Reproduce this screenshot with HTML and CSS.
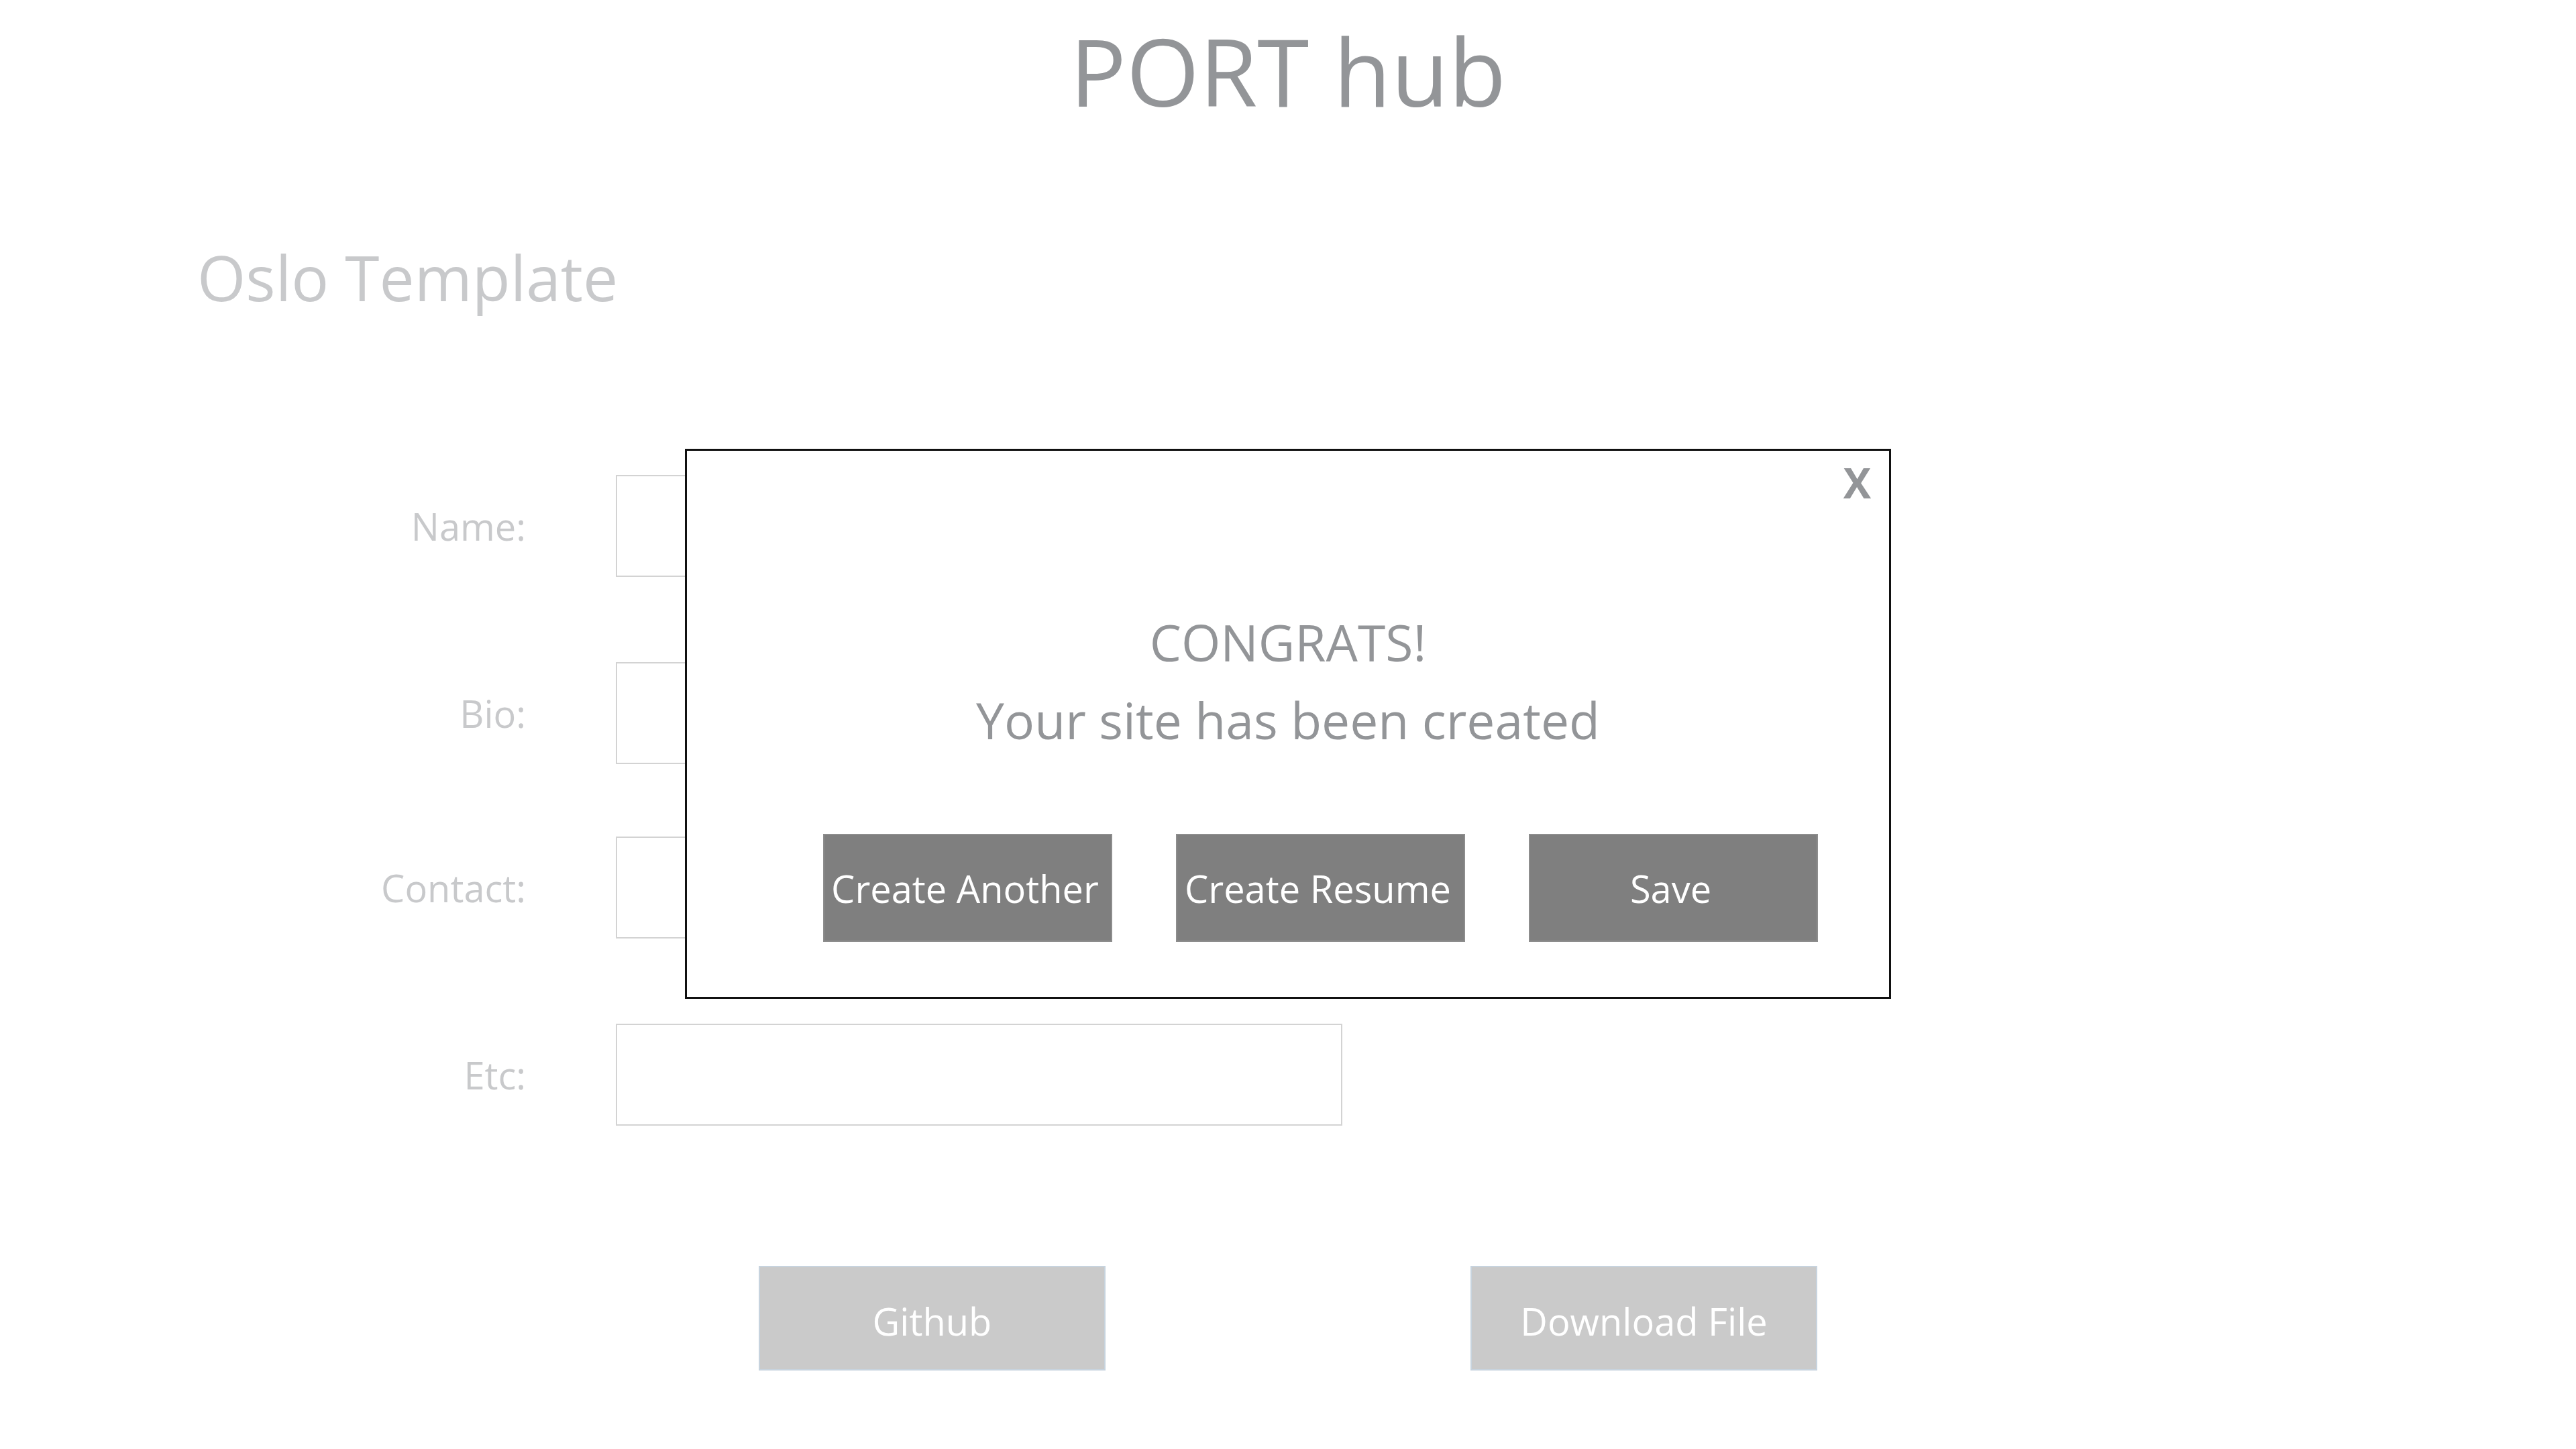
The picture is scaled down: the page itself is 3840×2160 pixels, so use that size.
FILE: index.html
```html
<!DOCTYPE html>
<html lang="en">
<head>
<meta charset="utf-8">
<title>PORT hub</title>
<link rel="stylesheet" href="styles.css">
</head>
<body>
<div class="page">
  <h1 class="brand">PORT hub</h1>
  <h2 class="template-title">Oslo Template</h2>
  <form class="form">
    <div class="row">
      <label class="label" for="f-name">Name:</label>
      <input class="field" id="f-name" type="text">
    </div>
    <div class="row row-wide">
      <label class="label" for="f-bio">Bio:</label>
      <input class="field" id="f-bio" type="text">
    </div>
    <div class="row row-narrow">
      <label class="label" for="f-contact">Contact:</label>
      <input class="field" id="f-contact" type="text">
    </div>
    <div class="row row-wide">
      <label class="label" for="f-etc">Etc:</label>
      <input class="field" id="f-etc" type="text">
    </div>
  </form>
  <div class="actions">
    <button class="btn-light" type="button">Github</button>
    <button class="btn-light" type="button">Download File</button>
  </div>

  <div class="modal">
    <button class="modal-close" type="button">X</button>
    <div class="modal-text">
      <div class="modal-line">CONGRATS!</div>
      <div class="modal-line second">Your site has been created</div>
    </div>
    <div class="modal-actions">
      <button class="btn-dark" type="button">Create Another</button>
      <button class="btn-dark" type="button">Create Resume</button>
      <button class="btn-dark" type="button">Save</button>
    </div>
  </div>
</div>
</body>
</html>
```

FILE: styles.css
```css
* { box-sizing: border-box; }

html, body {
  margin: 0;
  padding: 0;
  background: #ffffff;
}

body {
  font-family: "Open Sans", "Noto Sans", sans-serif;
  width: 3840px;
  height: 2160px;
  overflow: hidden;
}

.page {
  position: relative;
  width: 3840px;
  height: 2160px;
  display: flex;
  flex-direction: column;
}

.brand {
  margin: 35px 0 0 0;
  font-size: 140px;
  line-height: 1;
  font-weight: 400;
  color: #939598;
  text-align: center;
}

.template-title {
  margin: 192px 0 0 294px;
  font-size: 93px;
  line-height: 1;
  font-weight: 400;
  color: #c8c9cb;
}

.form {
  margin: 248px 0 0 0;
  display: flex;
  flex-direction: column;
}

.row {
  display: flex;
  align-items: center;
  gap: 134px;
  height: 152px;
}

.row-wide {
  margin-top: 127px;
}

.row-narrow {
  margin-top: 108px;
}

.label {
  width: 784px;
  text-align: right;
  font-size: 56px;
  line-height: 1;
  color: #c8c9cb;
}

.field {
  width: 1083px;
  height: 152px;
  border: 2px solid #d3d3d3;
  background: #ffffff;
  margin: 0;
  padding: 0 20px;
  font: inherit;
  outline: none;
}

.actions {
  margin: 209px 0 0 1131px;
  display: flex;
  gap: 544px;
}

.btn-light {
  width: 517px;
  height: 156px;
  background: #cacaca;
  border: 2px solid #c7d3de;
  color: #ffffff;
  font-family: inherit;
  font-size: 56px;
  padding: 8px 0 0 0;
  margin: 0;
}

.modal {
  position: absolute;
  left: 1021px;
  top: 669px;
  width: 1798px;
  height: 820px;
  background: #ffffff;
  border: 3px solid #111111;
  display: flex;
  flex-direction: column;
}

.modal-close {
  position: absolute;
  top: 16px;
  right: 27px;
  background: none;
  border: none;
  padding: 0;
  margin: 0;
  font-family: inherit;
  font-size: 62px;
  line-height: 1;
  font-weight: 700;
  color: #939598;
}

.modal-text {
  margin-top: 248px;
  display: flex;
  flex-direction: column;
  align-items: center;
  color: #939598;
  font-size: 75px;
  line-height: 1;
}

.modal-line.second {
  margin-top: 41px;
}

.modal-actions {
  margin: 132px 0 0 203px;
  display: flex;
  gap: 95px;
}

.btn-dark {
  width: 431px;
  height: 161px;
  background: #7f7f7f;
  border: 2px solid #8d8d8d;
  color: #ffffff;
  font-family: inherit;
  font-size: 56px;
  padding: 0 8px 0 0;
  margin: 0;
  white-space: nowrap;
}
```
